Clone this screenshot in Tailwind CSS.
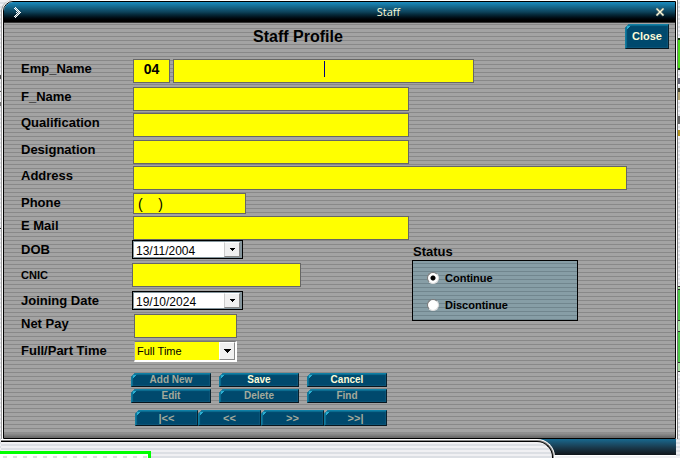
<!DOCTYPE html>
<html lang="en">
<head>
  <meta charset="UTF-8">
  <meta name="viewport" content="width=device-width, initial-scale=1.0">
  <title>Staff</title>
  <script src="https://cdn.jsdelivr.net/npm/@tailwindcss/browser@4"></script>
  <style>
    .stripes { background: linear-gradient(to bottom, #a3a3a3 0 1px, #888888 1px 2px, #a3a3a3 2px 4px) 0 0 / 4px 4px; }
    .stripes-status { background: linear-gradient(to bottom, #879ea6 0 2px, #71868e 2px 3px, #879ea6 3px 4px) 0 0 / 4px 4px; }
    .stripes-light { background: linear-gradient(to bottom, #f0f0f3 0 2px, #dcdfe4 2px 4px) 0 0 / 4px 4px; }
    .dots { background-image: radial-gradient(#dddddd 2px, transparent 2px); background-size: 10px 6px; }
    /* dark blue button with the cut top left corner */
    .btn {
      clip-path: polygon(4px 0, 100% 0, 100% 100%, 0 100%, 0 4px);
      background: linear-gradient(135deg, #2cb4d8 0 4px, transparent 4px), #00496d;
      border-style: solid;
      border-width: 1px;
      border-color: #0f7fa5 #08202c #08151d #107ca0;
      box-shadow: inset 1px 1px 1px #0d6f93, inset -1px -1px 1px #0d5678;
    }
  </style>
</head>
<body class="stripes-light min-h-screen flex flex-col overflow-hidden font-['Liberation_Sans',Arial,sans-serif] text-black">
  <div class="flex">
    <!-- page behind the window, left edge -->
    <div class="w-px shrink-0 flex flex-col">
      <span class="h-1 mt-[75px] bg-[#555]"></span>
      <span class="h-px mt-3 bg-[#555]"></span>
      <span class="h-1 mt-2.5 bg-[#777]"></span>
      <span class="h-px mt-[122px] bg-[#333]"></span>
    </div>

    <main class="grow rounded-tl-xl border-l border-[#999] bg-white pl-px pt-px">
      <div class="rounded-tl-[10px] overflow-hidden border border-black">
        <header class="h-5 flex items-center bg-linear-to-b from-[#1a8dc0] via-[#0d425a] to-black text-[#fdfbd8]">
          <svg class="ml-2.5 mt-px w-2.5 h-3" viewBox="0 0 10 12" shape-rendering="crispEdges">
            <path fill="#fff" d="M1 0h1v1h-1zM0 1h1v1h-1zM2 1h1v1h-1zM1 2h1v1h-1zM3 2h1v1h-1zM2 3h1v1h-1zM4 3h1v1h-1zM3 4h1v1h-1zM5 4h1v1h-1zM2 5h1v1h-1zM4 5h1v1h-1zM6 5h1v1h-1zM3 6h1v1h-1zM5 6h1v1h-1zM2 7h1v1h-1zM4 7h1v1h-1zM1 8h1v1h-1zM3 8h1v1h-1zM0 9h1v1h-1zM2 9h1v1h-1zM1 10h1v1h-1z"/>
            <path fill="#fff" d="M1 1h1v1h-1zM2 2h1v1h-1zM3 3h1v1h-1zM4 4h1v1h-1zM5 5h1v1h-1zM4 6h1v1h-1zM3 7h1v1h-1zM2 8h1v1h-1zM1 9h1v1h-1z" opacity=".5"/>
          </svg>
          <h1 class="grow pl-[98px] text-center text-[11px] leading-4 font-['Open_Sans',sans-serif]">Staff</h1>
          <button type="button" aria-label="Close window" class="mr-2.5 w-2.5 h-3 flex items-center justify-center">
            <svg class="w-2.5 h-2.5" viewBox="0 0 10 10">
              <path d="M1.5 1.5L8.5 8.5M8.5 1.5L1.5 8.5" stroke="#5a6c70" stroke-width="2.8"/>
              <path d="M1.5 1.5L8.5 8.5M8.5 1.5L1.5 8.5" stroke="#fdfbd8" stroke-width="1.3"/>
            </svg>
          </button>
        </header>

        <form class="stripes border-t border-[#333] pl-[17px]">
          <div class="h-9 flex items-start">
            <h2 class="pl-[232px] pt-1 text-base leading-5 font-bold">Staff Profile</h2>
            <button type="button" class="btn ml-auto mr-1.5 mt-px w-11 h-[25px] text-[11px] font-bold text-[#fdfbd8]">Close</button>
          </div>

          <div class="flex items-start mb-1">
            <label for="empName" class="w-28 text-[13px] leading-5 font-bold">Emp_Name</label>
            <input type="text" aria-label="Employee number" value="04" class="w-[37px] h-6 mr-[3px] pb-1 border border-[#666] bg-[#ffff00] text-center text-sm font-bold">
            <div class="relative">
              <input id="empName" type="text" class="block w-[301px] h-6 border border-[#666] bg-[#ffff00] text-center text-sm font-bold">
              <span class="absolute left-1/2 top-0.5 w-px h-4 bg-[#000080]"></span>
            </div>
          </div>
          <div class="flex items-start mb-0.5">
            <label for="fName" class="w-28 text-[13px] leading-5 font-bold">F_Name</label>
            <input id="fName" type="text" class="w-[276px] h-6 border border-[#666] bg-[#ffff00] px-1 text-sm">
          </div>
          <div class="flex items-start mb-[3px]">
            <label for="qualification" class="w-28 text-[13px] leading-5 font-bold">Qualification</label>
            <input id="qualification" type="text" class="w-[276px] h-6 border border-[#666] bg-[#ffff00] px-1 text-sm">
          </div>
          <div class="flex items-start mb-0.5">
            <label for="designation" class="w-28 text-[13px] leading-5 font-bold">Designation</label>
            <input id="designation" type="text" class="w-[276px] h-6 border border-[#666] bg-[#ffff00] px-1 text-sm">
          </div>
          <div class="flex items-start mb-[3px]">
            <label for="address" class="w-28 shrink-0 text-[13px] leading-5 font-bold">Address</label>
            <input id="address" type="text" class="grow mr-12 h-6 border border-[#666] bg-[#ffff00] px-1 text-sm">
          </div>
          <div class="flex items-start mb-0.5">
            <label for="phone" class="w-28 text-[13px] leading-5 font-bold">Phone</label>
            <input id="phone" type="text" value="(&nbsp;&nbsp;&nbsp;&nbsp;)" class="w-[113px] h-[21px] border border-[#666] bg-[#ffff00] px-1 text-sm">
          </div>
          <div class="flex items-start">
            <label for="email" class="w-28 text-[13px] leading-5 font-bold">E Mail</label>
            <input id="email" type="text" class="w-[276px] h-6 border border-[#666] bg-[#ffff00] px-1 text-sm">
          </div>

          <div class="flex items-start">
            <div class="w-[391px] shrink-0">
              <div class="flex items-start mb-[3px]">
                <label for="dob" class="w-[111px] text-[13px] leading-5 font-bold">DOB</label>
                <div class="flex w-[111px] h-[19px] border border-black bg-[#84959d] pl-px pt-px pb-px pr-0.5">
                  <input id="dob" type="text" value="13/11/2004" class="min-w-0 w-full bg-white pl-0.5 pt-0.5 text-xs">
                  <button type="button" aria-label="Pick date of birth" class="w-4 shrink-0 border border-t-white border-l-[#ccc] border-b-[#888] border-r-[#888] bg-[#f0f0f0] flex items-center justify-center">
                    <svg class="w-[5px] h-[3px]" viewBox="0 0 5 3" shape-rendering="crispEdges"><path d="M0 0h5v1h-5zM1 1h3v1h-3zM2 2h1v1h-1z"/></svg>
                  </button>
                </div>
              </div>
              <div class="flex items-start mb-1">
                <label for="cnic" class="w-[111px] text-[11px] leading-6 font-bold">CNIC</label>
                <input id="cnic" type="text" class="w-[169px] h-6 border border-[#666] bg-[#ffff00] px-1 text-sm">
              </div>
              <div class="flex items-start mb-[3px]">
                <label for="joining" class="w-[111px] text-[13px] leading-5 font-bold">Joining Date</label>
                <div class="flex w-[111px] h-[19px] border border-black bg-[#84959d] pl-px pt-px pb-px pr-0.5">
                  <input id="joining" type="text" value="19/10/2024" class="min-w-0 w-full bg-white pl-0.5 pt-0.5 text-xs">
                  <button type="button" aria-label="Pick joining date" class="w-4 shrink-0 border border-t-white border-l-[#ccc] border-b-[#888] border-r-[#888] bg-[#f0f0f0] flex items-center justify-center">
                    <svg class="w-[5px] h-[3px]" viewBox="0 0 5 3" shape-rendering="crispEdges"><path d="M0 0h5v1h-5zM1 1h3v1h-3zM2 2h1v1h-1z"/></svg>
                  </button>
                </div>
              </div>
              <div class="flex items-start mb-[3px]">
                <label for="netPay" class="w-[113px] text-[13px] leading-5 font-bold">Net Pay</label>
                <input id="netPay" type="text" class="w-[103px] h-6 border border-[#666] bg-[#ffff00] px-1 text-sm">
              </div>
              <div class="flex items-start">
                <label for="fullPart" class="w-[113px] text-[13px] leading-5 font-bold">Full/Part Time</label>
                <div class="relative w-[103px] h-[21px] border-t border-l border-t-[#777] border-l-[#aaa] border-b-2 border-r-2 border-b-white border-r-white">
                  <select id="fullPart" class="block w-full h-full appearance-none bg-[#ffff00] pl-0.5 text-[11px]">
                    <option>Full Time</option>
                    <option>Part Time</option>
                  </select>
                  <span class="pointer-events-none absolute right-0 top-0 bottom-0 w-4 border border-t-white border-l-white border-b-[#888] border-r-[#888] bg-[#f0f0f0] flex items-center justify-center">
                    <svg class="w-[7px] h-1" viewBox="0 0 7 4" shape-rendering="crispEdges"><path d="M0 0h7v1h-7zM1 1h5v1h-5zM2 2h3v1h-3zM3 3h1v1h-1z"/></svg>
                  </span>
                </div>
              </div>
            </div>

            <fieldset class="w-[166px]">
              <legend class="pl-px pt-1 text-[13px] leading-4 font-bold">Status</legend>
              <div class="stripes-status h-[61px] border border-black pl-3.5 pt-2.5 flex flex-col gap-[13px] text-[11px] leading-3.5 font-bold">
                <label class="flex items-center gap-1.5">
                  <input type="radio" name="status" checked class="appearance-none w-3 h-3 rounded-full border border-[#ddd] border-t-[#777] border-l-[#777] bg-white checked:bg-[radial-gradient(circle,#000_2px,#fff_3px)]">
                  Continue
                </label>
                <label class="flex items-center gap-1.5">
                  <input type="radio" name="status" class="appearance-none w-3 h-3 rounded-full border border-[#ddd] border-t-[#777] border-l-[#777] bg-white checked:bg-[radial-gradient(circle,#000_2px,#fff_3px)]">
                  Discontinue
                </label>
              </div>
            </fieldset>
          </div>

          <div class="pl-[110px] pt-[11px] grid grid-cols-[80px_80px_80px] gap-x-2 gap-y-0.5 text-[10px] leading-3 font-bold text-[#a3aa9c]">
            <button type="button" class="btn h-3.5">Add New</button>
            <button type="button" class="btn h-3.5 text-[#fdfbd8]">Save</button>
            <button type="button" class="btn h-3.5 text-[#fdfbd8]">Cancel</button>
            <button type="button" class="btn h-3.5">Edit</button>
            <button type="button" class="btn h-3.5">Delete</button>
            <button type="button" class="btn h-3.5">Find</button>
          </div>
          <div class="pl-[114px] pt-[7px] pb-1.5 flex text-[11px] leading-3 font-bold text-[#a3aa9c]">
            <button type="button" class="btn w-[63px] h-4">|&lt;&lt;</button>
            <button type="button" class="btn w-[63px] h-4">&lt;&lt;</button>
            <button type="button" class="btn w-[63px] h-4">&gt;&gt;</button>
            <button type="button" class="btn w-[63px] h-4">&gt;&gt;|</button>
          </div>
          <div class="-ml-[17px] h-1.5 bg-linear-to-b from-[#999]/60 to-[#666]"></div>
        </form>
      </div>
    </main>

    <!-- page behind the window, right edge -->
    <div class="w-[4px] shrink-0 border-l border-white flex flex-col">
      <div class="grow border-l border-[#777] flex flex-col">
        <span class="h-8 mt-[38px] border-y-2 border-[#173c10] bg-[#4ddb1c]"></span>
        <span class="h-1.5 mt-2 bg-[#667]"></span>
        <span class="h-1 mt-1 bg-[#443]"></span>
        <span class="h-2 bg-[#b5a878]"></span>
        <span class="h-2 mt-4 bg-[#666]"></span>
        <span class="h-1.5 mt-1.5 bg-[#b39420]"></span>
        <span class="h-1 mt-[150px] border-y border-[#333] bg-[#a5dfa0]"></span>
        <span class="h-[30px] bg-[#4fc94a]"></span>
        <span class="h-3 border-y border-[#333] bg-[#a5dfa0]"></span>
        <span class="h-[30px] bg-[#4fc94a]"></span>
        <span class="h-2.5 border-y border-[#333] bg-[#a5dfa0]"></span>
      </div>
    </div>
  </div>

  <!-- lower edge: blue bar with the light tab in front of it -->
  <div class="ml-px mr-1 h-[17px] border-b border-white bg-linear-to-b from-[#17698f] to-[#10151a]">
    <div class="mr-[121px] h-[19px] rounded-tr-[18px] border-t border-r border-white bg-[#888] pt-px pr-px">
      <div class="stripes-light h-full rounded-tr-2xl border-t border-r border-black pt-[9px]">
        <div class="dots -ml-px w-[151px] h-2 border-t-3 border-r-3 border-[#00ff00] bg-white"></div>
      </div>
    </div>
  </div>
</body>
</html>
